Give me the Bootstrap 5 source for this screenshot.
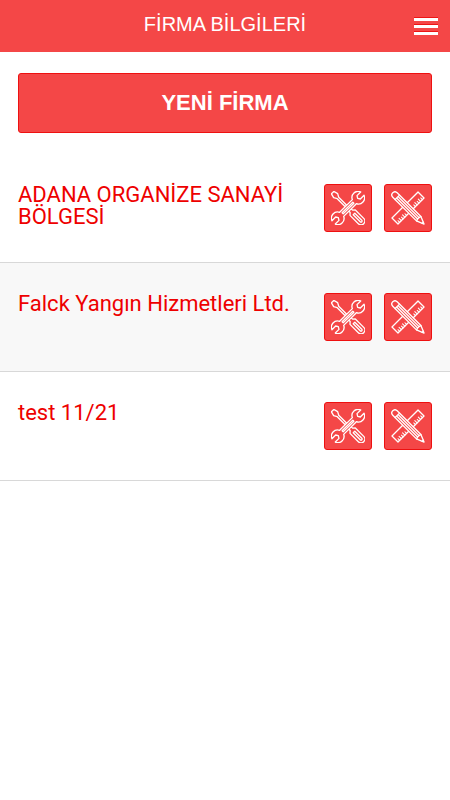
<!DOCTYPE html>
<html lang="tr">
<head>
<meta charset="utf-8">
<meta name="viewport" content="width=device-width, initial-scale=1">
<title>Firma Bilgileri</title>
<link href="https://cdn.jsdelivr.net/npm/bootstrap@5.3.0/dist/css/bootstrap.min.css" rel="stylesheet">
<style>
  :root { --brand: #f44747; --brand-edge: #ee1010; }
  body { font-family: "Liberation Sans", Arial, sans-serif; background: #fff; }
  .topbar { background: var(--brand); min-height: 52px; padding: 0 12px; }
  .topbar-side { width: 24px; }
  .topbar h1 { font-size: 20px; line-height: 48px; padding-bottom: 4px; font-weight: 400; }
  .menu-btn { gap: 4px; }
  .menu-btn span { height: 3px; background: #fff; box-shadow: 0 -1px #ee1515; }
  .page-pad { padding: 21px 18px; }
  .brand-btn {
    --bs-btn-bg: var(--brand); --bs-btn-border-color: var(--brand-edge); --bs-btn-color: #fff;
    --bs-btn-hover-bg: #e93c3c; --bs-btn-hover-border-color: #c00; --bs-btn-hover-color: #fff;
    --bs-btn-active-bg: #d93030; --bs-btn-active-border-color: #c00; --bs-btn-active-color: #fff;
    --bs-btn-border-radius: 3px;
  }
  .new-btn { font-size: 22px; line-height: 32px; padding: 13px; }
  .firm { padding: 30px 18px; border-bottom: 1px solid #d8d8d8; gap: 12px; }
  .firm:nth-child(even) { background: #f8f8f8; }
  .firm h2 { font: 400 22px/22px Roboto, sans-serif; color: #ee0000; }
  .tool-btn { width: 48px; height: 48px; padding: 0; }
  .tool-btn svg { width: 34px; height: 34px; }
  .glyph { fill: none; stroke: #fff; stroke-width: 1.4; stroke-linejoin: round; stroke-linecap: round; }
  .solid { fill: var(--brand); }
</style>
</head>
<body>
<svg class="d-none" aria-hidden="true">
  <symbol id="tools" viewBox="-18 -18 36 36">
    <g class="glyph">
      <g transform="rotate(-45)">
        <path d="M-1.800-23h3.600l1.200 4.500L1.100-15V-3H-1.100V-15l-1.900-3.500z"/>
        <path d="M-1.800 2h3.600v3l2.200 2v12.500a4 4 0 0 1-8 0V7l2.200-2z"/>
        <path d="M-1.200 9v10.500a1.200 1.200 0 0 0 2.400 0V9z"/>
      </g>
      <g transform="rotate(45)">
        <path class="solid" d="M-2.500-21.500v5.500L0-14.500l2.500-1.500V-21.500A6.500 6.500 0 0 1 3-9.500V9.500A6.500 6.500 0 0 1 2.500 21.500v-5.500L0 14.500l-2.500 1.500V21.500A6.500 6.500 0 0 1-3 9.500V-9.500A6.500 6.500 0 0 1-2.500-21.500z"/>
        <path d="M-.8-8h1.600v16H-.8z"/>
      </g>
    </g>
  </symbol>
  <symbol id="draft" viewBox="-18 -18 36 36">
    <g class="glyph">
      <g transform="rotate(45)">
        <path d="M-4.500-19.500h9v39h-9z"/>
        <path d="M4.500-17H2M4.500-14.400H1M4.500-11.800H2M4.500-9.200H1M4.500-6.600H2M4.500 6.600H2M4.500 9.200H1M4.500 11.800H2M4.500 14.400H1M4.500 17H2" stroke-width="1.100"/>
      </g>
      <g transform="rotate(-45)">
        <path class="solid" d="M-3.300-19.500a3.300 3.300 0 0 1 6.600 0V16L0 24l-3.300-8z"/>
        <path d="M-3.300-16h6.600M-1.100-16V15.500M1.100-16V15.500M-3.300 16l2.200-.5h2.200l2.200.5M-.8 22h1.600"/>
      </g>
    </g>
  </symbol>
</svg>

<header class="topbar d-flex align-items-center justify-content-between">
  <span class="topbar-side"></span>
  <h1 class="mb-0 text-white text-center">FİRMA BİLGİLERİ</h1>
  <button type="button" class="menu-btn topbar-side btn border-0 rounded-0 p-0 d-flex flex-column align-items-stretch" aria-label="Menü">
    <span></span><span></span><span></span>
  </button>
</header>

<main>
  <div class="page-pad">
    <button type="button" class="btn brand-btn new-btn w-100 fw-bold">YENİ FİRMA</button>
  </div>
  <ul class="list-unstyled m-0">
    <li class="firm d-flex align-items-start">
      <h2 class="m-0 flex-grow-1">ADANA ORGANİZE SANAYİ BÖLGESİ</h2>
      <button type="button" class="btn brand-btn tool-btn flex-shrink-0 d-flex align-items-center justify-content-center" aria-label="Servis"><svg><use href="#tools"/></svg></button>
      <button type="button" class="btn brand-btn tool-btn flex-shrink-0 d-flex align-items-center justify-content-center" aria-label="Düzenle"><svg><use href="#draft"/></svg></button>
    </li>
    <li class="firm d-flex align-items-start">
      <h2 class="m-0 flex-grow-1">Falck Yangın Hizmetleri Ltd.</h2>
      <button type="button" class="btn brand-btn tool-btn flex-shrink-0 d-flex align-items-center justify-content-center" aria-label="Servis"><svg><use href="#tools"/></svg></button>
      <button type="button" class="btn brand-btn tool-btn flex-shrink-0 d-flex align-items-center justify-content-center" aria-label="Düzenle"><svg><use href="#draft"/></svg></button>
    </li>
    <li class="firm d-flex align-items-start">
      <h2 class="m-0 flex-grow-1">test 11/21</h2>
      <button type="button" class="btn brand-btn tool-btn flex-shrink-0 d-flex align-items-center justify-content-center" aria-label="Servis"><svg><use href="#tools"/></svg></button>
      <button type="button" class="btn brand-btn tool-btn flex-shrink-0 d-flex align-items-center justify-content-center" aria-label="Düzenle"><svg><use href="#draft"/></svg></button>
    </li>
  </ul>
</main>
<script src="https://cdn.jsdelivr.net/npm/bootstrap@5.3.0/dist/js/bootstrap.bundle.min.js"></script>
</body>
</html>
